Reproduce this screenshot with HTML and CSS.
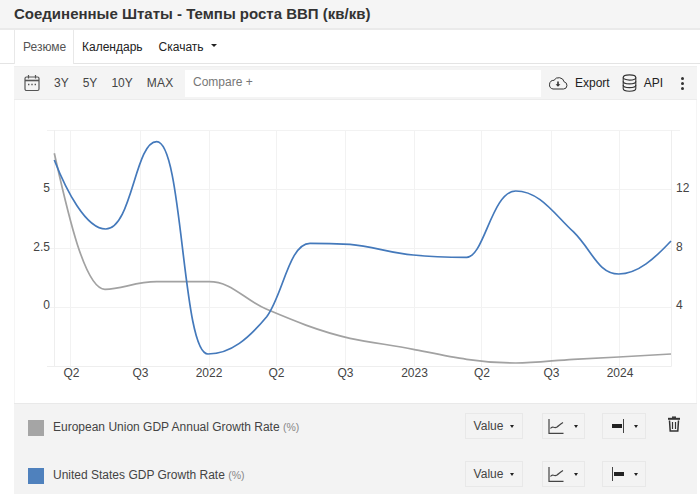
FILE: index.html
```html
<!DOCTYPE html>
<html lang="ru">
<head>
<meta charset="utf-8">
<title>Соединенные Штаты - Темпы роста ВВП (кв/кв)</title>
<link rel="stylesheet" href="styles.css">
</head>
<body>
<header class="title-bar"><h1 class="title">Соединенные Штаты - Темпы роста ВВП (кв/кв)</h1></header>
<nav class="tabs">
  <a class="tab tab-active">Резюме</a>
  <a class="tab">Календарь</a>
  <a class="tab">Скачать <span class="caret caret-tab"></span></a>
</nav>
<main class="panel">
  <div class="toolbar">
    <svg class="icon-cal" width="18" height="18" viewBox="0 0 18 18" fill="none" stroke="#555" stroke-width="1.2">
      <rect x="2" y="3" width="14" height="13.5" rx="1.5"/>
      <path d="M2 6.500h14" stroke-width="1.6"/>
      <path d="M5.500 1v3.500M12.500 1v3.500"/>
      <path d="M5 10.500h1.400M8.300 10.500h1.400M11.600 10.500h1.400" stroke-width="1.3"/>
    </svg>
    <div class="ranges">
      <span>3Y</span><span>5Y</span><span>10Y</span><span>MAX</span>
    </div>
    <div class="compare">Compare +</div>
    <div class="actions">
      <svg class="icon-cloud" width="20" height="14" viewBox="0 0 20 14" fill="none" stroke="#333" stroke-width="1">
        <path d="M5 13h10.500a3.600 3.600 0 0 0 .7-7.100A5.600 5.600 0 0 0 6 4.300A4.400 4.400 0 0 0 5 13z"/>
        <path d="M10 5.500v3.500" stroke-width="1.600"/>
        <path d="M7.600 8.200h4.800L10 10.800z" fill="#333" stroke="none"/>
      </svg>
      <span class="action-label">Export</span>
      <svg class="icon-db" width="15" height="18" viewBox="0 0 15 18" fill="none" stroke="#333" stroke-width="1.100">
        <ellipse cx="7.500" cy="3.500" rx="6.300" ry="2.600"/>
        <path d="M1.200 3.500v11c0 1.500 2.800 2.700 6.300 2.700s6.300-1.200 6.300-2.700v-11"/>
        <path d="M1.200 7.200c0 1.500 2.800 2.700 6.300 2.700s6.300-1.200 6.300-2.700M1.200 10.900c0 1.500 2.800 2.700 6.300 2.700s6.300-1.200 6.300-2.700"/>
      </svg>
      <span class="action-label">API</span>
      <span class="kebab"><i></i><i></i><i></i></span>
    </div>
  </div>
  <div class="chart-wrap">
    <svg class="chart" width="683" height="303" viewBox="14 100 683 303">
      <g class="grid">
        <path d="M47 130.500H680M47 189.500H671M47 248.500H671M47 307.500H671"/>
        <path d="M70.500 130V366M140.500 130V366M209.500 130V366M276.500 130V366M345.500 130V366M414.500 130V366M481.500 130V366M551.500 130V366M619.500 130V366"/>
      </g>
      <path class="axis" d="M54.500 130V366.500M47 366.500H671.500V130"/>
      <path class="line-gray" d="M54.300 153.300C66 205 84 289.300 105 289.300C122 289.300 135 281.700 156.700 281.700L209 281.700C232 281.700 243 299 266.700 309.300C292 320 318 331 350 338.300C372 343 392 345 413.300 349.300C432 353 450 357 466.700 359.300C485 362 500 363 515.700 363C535 363 553 360.500 573.300 359.300L618.700 357L671 354"/>
      <path class="line-blue" d="M54.300 160C66 190 86 229 105.700 229C132 229 135 141.700 156.700 141.700C183 141.700 182 354 208 354C231 354 249 338 266.700 316.700C283 295 289 243.300 310 243.300C325 243.300 338 243.700 350 244.300C372 246 390 253 413.300 255C432 257 450 257.300 466.700 257.300C484 257.300 492 191 515.700 191C540 191 555 215 573.300 231.700C592 250 598 274 618.700 274C638 274 655 258 671 241"/>
      <g class="tick">
        <text x="50" y="192" text-anchor="end">5</text>
        <text x="50" y="251" text-anchor="end">2.5</text>
        <text x="50" y="309" text-anchor="end">0</text>
        <text x="676" y="192">12</text>
        <text x="676" y="251">8</text>
        <text x="676" y="309">4</text>
        <text x="71.500" y="377" text-anchor="middle">Q2</text>
        <text x="140.500" y="377" text-anchor="middle">Q3</text>
        <text x="209" y="377" text-anchor="middle">2022</text>
        <text x="276.500" y="377" text-anchor="middle">Q2</text>
        <text x="345.500" y="377" text-anchor="middle">Q3</text>
        <text x="414.500" y="377" text-anchor="middle">2023</text>
        <text x="482" y="377" text-anchor="middle">Q2</text>
        <text x="551.500" y="377" text-anchor="middle">Q3</text>
        <text x="620" y="377" text-anchor="middle">2024</text>
      </g>
    </svg>
  </div>
  <section class="legend">
    <div class="series">
      <span class="swatch swatch-gray"></span>
      <span class="series-name">European Union GDP Annual Growth Rate <small class="unit">(%)</small></span>
      <div class="controls">
        <div class="ctl ctl-value">Value <span class="caret"></span></div>
        <div class="ctl ctl-type">
          <svg width="16" height="15" viewBox="0 0 16 15" fill="none" stroke="#444" stroke-width="1.200"><path d="M1 0V14.400H15.500"/><path d="M2.500 9.500C4.500 6 6 10 9 8C11 6.500 12.500 5 15 3.500"/></svg>
          <span class="caret"></span>
        </div>
        <div class="ctl ctl-axis">
          <svg width="12" height="14" viewBox="0 0 12 14"><rect x="0" y="5" width="10" height="4" fill="#222"/><rect x="11" y="0" width="1" height="14" fill="#444"/></svg>
          <span class="caret"></span>
        </div>
      </div>
      <svg class="trash" width="12" height="16" viewBox="0 0 12 16" fill="none" stroke="#333">
        <path d="M0 2.800H12" stroke-width="2"/><path d="M4 1.200H8" stroke-width="1.500"/>
        <path d="M1.500 4.500L2.200 15H9.800L10.500 4.500" stroke-width="1.500"/>
        <path d="M4.500 6V13M7.500 6V13" stroke-width="1.200"/>
      </svg>
    </div>
    <div class="series">
      <span class="swatch swatch-blue"></span>
      <span class="series-name">United States GDP Growth Rate <small class="unit">(%)</small></span>
      <div class="controls">
        <div class="ctl ctl-value">Value <span class="caret"></span></div>
        <div class="ctl ctl-type">
          <svg width="16" height="15" viewBox="0 0 16 15" fill="none" stroke="#444" stroke-width="1.200"><path d="M1 0V14.400H15.500"/><path d="M2.500 9.500C4.500 6 6 10 9 8C11 6.500 12.500 5 15 3.500"/></svg>
          <span class="caret"></span>
        </div>
        <div class="ctl ctl-axis">
          <svg width="12" height="14" viewBox="0 0 12 14"><rect x="0" y="0" width="1" height="14" fill="#444"/><rect x="2" y="5" width="10" height="4" fill="#222"/></svg>
          <span class="caret"></span>
        </div>
      </div>
      <span class="trash-spacer"></span>
    </div>
  </section>
</main>
</body>
</html>
```

FILE: styles.css
```css
* { box-sizing: border-box; }
html, body { margin: 0; padding: 0; }
body {
  width: 700px;
  height: 494px;
  overflow: hidden;
  background: #fff;
  font-family: "Liberation Sans", Arial, sans-serif;
  font-size: 12px;
  color: #333;
}
.title-bar {
  height: 30px;
  padding: 0 14px 1px;
  display: flex;
  align-items: center;
  background: #f5f5f5;
  border-bottom: 2px solid #eaeaea;
}
.title {
  margin: 0;
  font-size: 15px;
  line-height: 26px;
  font-weight: 700;
  color: #333;
}
.tabs {
  height: 34px;
  padding-left: 14px;
  display: flex;
  border-bottom: 1px solid #e4e4e4;
}
.tab {
  height: 33px;
  padding: 0 8px;
  display: flex;
  align-items: center;
  gap: 4px;
  color: #222;
}
.tab-active {
  width: 60px;
  height: 34px;
  background: #fff;
  color: #555;
  border-left: 1px solid #e8e8e8;
  border-right: 1px solid #e8e8e8;
}
.caret {
  display: inline-block;
  width: 0;
  height: 0;
  border-left: 2.500px solid transparent;
  border-right: 2.500px solid transparent;
  border-top: 3px solid #222;
}
.caret-tab {
  margin-left: 3px;
  border-left-width: 3.500px;
  border-right-width: 3.500px;
  border-top-width: 3.500px;
  position: relative;
  top: -1px;
}
.panel {
  width: 683px;
  height: 430px;
  margin: 2px 0 0 14px;
  border-left: 1px solid #f5f5f5;
  border-right: 1px solid #f5f5f5;
  display: flex;
  flex-direction: column;
}
.toolbar {
  height: 34px;
  padding: 3px 0 3px 9px;
  display: flex;
  align-items: center;
  background: #f4f4f4;
  border-bottom: 1px solid #ececec;
  border-top: 1px solid #efefef;
  margin-left: -1px;
  margin-right: -1px;
}
.icon-cal { flex: none; }
.ranges {
  margin-left: 13px;
  width: 131px;
  display: flex;
  gap: 14px;
  font-size: 12px;
  color: #444;
}
.ranges span:last-child { letter-spacing: 0.200px; }
.compare {
  width: 356px;
  height: 27px;
  padding: 0 8px 2px;
  display: flex;
  align-items: center;
  background: #fff;
  color: #777;
  font-size: 12px;
}
.actions {
  flex: 1;
  display: flex;
  align-items: center;
  padding-left: 7px;
  font-size: 12px;
  color: #222;
}
.action-label { margin-left: 7px; }
.icon-db { margin-left: 12px; }
.kebab {
  margin-left: 18px;
  display: flex;
  flex-direction: column;
  gap: 2px;
}
.kebab i {
  display: block;
  width: 3px;
  height: 3px;
  border-radius: 50%;
  background: #333;
}
.chart-wrap {
  height: 303px;
  margin-left: -1px;
  flex: none;
}
.chart { display: block; }
.grid path { fill: none; stroke: #f2f2f2; stroke-width: 1; }
.axis { fill: none; stroke: #eeeeee; stroke-width: 1; }
.line-gray { fill: none; stroke: #a2a2a2; stroke-width: 1.700; }
.line-blue { fill: none; stroke: #4479bb; stroke-width: 1.700; }
.tick text {
  font-family: "Liberation Sans", Arial, sans-serif;
  font-size: 12px;
  fill: #444;
}
.legend {
  flex: 1;
  margin-left: -1px;
  margin-right: -1px;
  padding: 9px 17px 0 14px;
  background: #f3f3f3;
  border-top: 1px solid #e9e9e9;
  display: flex;
  flex-direction: column;
  gap: 22px;
}
.series {
  height: 26px;
  display: flex;
  align-items: center;
  flex: none;
}
.swatch {
  width: 16px;
  height: 16px;
  margin-top: 3px;
  flex: none;
}
.swatch-gray { background: #a5a5a5; }
.swatch-blue { background: #4f81bd; }
.series-name {
  margin-left: 9px;
  margin-top: 2px;
  flex: 1;
  color: #444;
  font-size: 12px;
}
.unit { font-size: 10.500px; color: #888; }
.controls {
  display: flex;
  gap: 19px;
}
.ctl {
  height: 26px;
  display: flex;
  align-items: center;
  justify-content: center;
  border: 1px solid #e8e8e8;
  gap: 10px;
}
.ctl-value { width: 58px; gap: 4px; color: #444; font-size: 12px; }
.ctl-value .caret { margin-left: 3px; }
.ctl-type { width: 43px; padding-right: 2px; }
.ctl-axis { width: 44px; margin-left: -2px; padding-left: 1px; }
.trash { margin-left: 22px; margin-top: -5px; flex: none; }
.trash-spacer { width: 34px; flex: none; }
```
